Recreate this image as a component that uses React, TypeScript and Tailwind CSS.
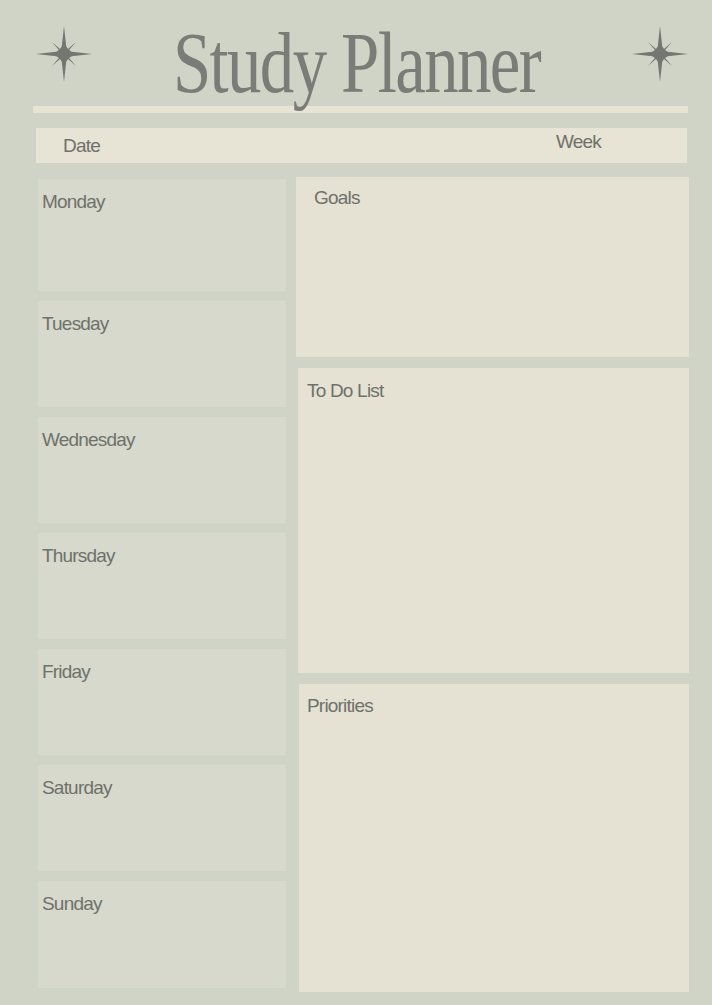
import React from 'react';

const days = [
  { name: 'Monday', h: 'h-[112px]' },
  { name: 'Tuesday', h: 'h-[106px]' },
  { name: 'Wednesday', h: 'h-[106px]' },
  { name: 'Thursday', h: 'h-[106px]' },
  { name: 'Friday', h: 'h-[106px]' },
  { name: 'Saturday', h: 'h-[106px]' },
  { name: 'Sunday', h: 'h-[107px]' },
];

// compass star: four long points, four short thin diagonals
const starPoints = (() => {
  const pts: string[] = [];
  const add = (deg: number, r: number) => {
    const a = (deg * Math.PI) / 180;
    pts.push(`${(r * Math.sin(a)).toFixed(2)},${(-r * Math.cos(a)).toFixed(2)}`);
  };
  for (let k = 0; k < 4; k++) {
    const t = k * 90;
    add(t, 28);
    add(t + 16, 8);
    add(t + 38, 6.5);
    add(t + 45, 17);
    add(t + 52, 6.5);
    add(t + 74, 8);
  }
  return pts.join(' ');
})();

function Star() {
  return (
    <svg width="56" height="56" viewBox="-28 -28 56 56" className="shrink-0">
      <polygon fill="#747672" points={starPoints} />
    </svg>
  );
}

const label = "text-[19px] leading-[22px] text-[#6f716b] tracking-[-0.8px] font-['Liberation_Sans',sans-serif]";

export default function App() {
  return (
    <div className="w-[712px] h-[1005px] bg-[#cfd4c6] flex flex-col overflow-hidden">
      {/* Header */}
      <div className="h-[104px] flex items-start justify-between pl-[36px] pr-[24px]">
        <div className="pt-[26px]">
          <Star />
        </div>
        <div className="pt-[20px] pr-[12px] flex-1 flex justify-center">
          <h1 className="text-[86px] leading-none text-[#7a7c78] font-['Liberation_Serif',serif] scale-x-[0.8] tracking-[-2px] whitespace-nowrap relative z-10">
            Study Planner
          </h1>
        </div>
        <div className="pt-[26px]">
          <Star />
        </div>
      </div>

      {/* Divider */}
      <div className="mt-[2px] ml-[33px] w-[655px] h-[7px] bg-[#e8e4d4]" />

      {/* Date / Week */}
      <div className="mt-[15px] ml-[36px] w-[651px] h-[35px] bg-[#e7e4d5] flex items-center justify-between pl-[27px] pr-[86px]">
        <span className={label}>Date</span>
        <span className={`${label} -mt-[8px]`}>Week</span>
      </div>

      {/* Body */}
      <div className="mt-[14px] flex gap-[10px] pl-[38px]">
        <div className="w-[248px] flex flex-col gap-[10px] pt-[2px]">
          {days.map((d) => (
            <div key={d.name} className={`${d.h} bg-[#d6d9cb] pl-[4px] pt-[11px]`}>
              <span className={label}>{d.name}</span>
            </div>
          ))}
        </div>
        <div className="w-[393px] flex flex-col gap-[11px]">
          <div className="h-[180px] bg-[#e5e2d3] pl-[18px] pt-[9px]">
            <span className={label}>Goals</span>
          </div>
          <div className="h-[305px] ml-[2px] bg-[#e5e2d3] pl-[9px] pt-[11px]">
            <span className={label}>To Do List</span>
          </div>
          <div className="h-[308px] ml-[3px] bg-[#e5e2d3] pl-[8px] pt-[10px]">
            <span className={label}>Priorities</span>
          </div>
        </div>
      </div>
    </div>
  );
}
